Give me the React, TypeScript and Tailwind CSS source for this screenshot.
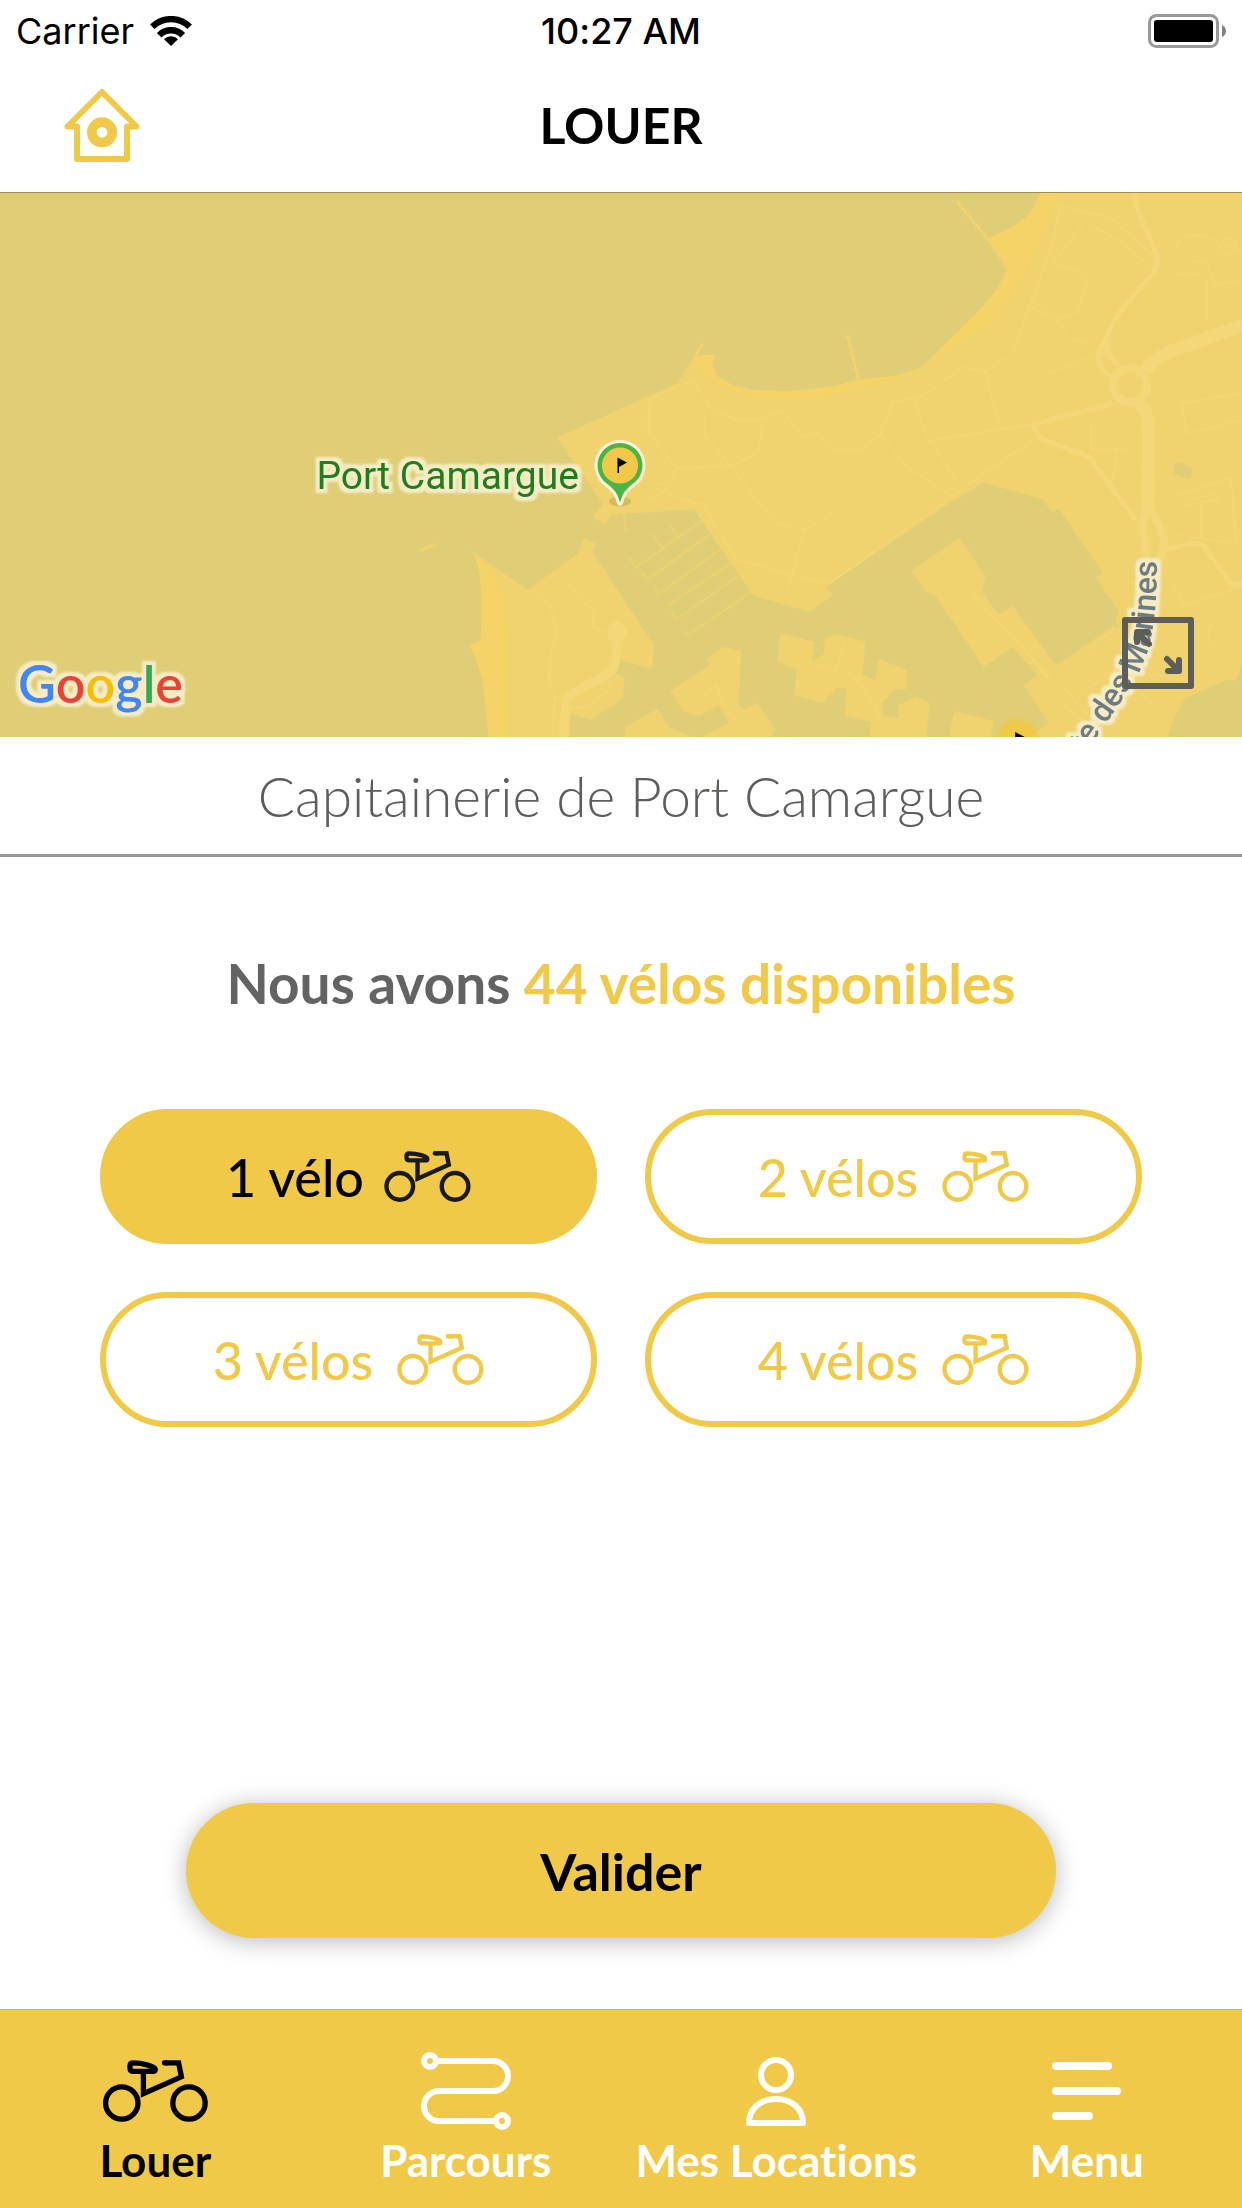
import { useState } from "react";

function BikeIcon({ className }: { className: string }) {
  return (
    <svg viewBox="0 0 105 62" className={className} fill="none" stroke="currentColor" strokeWidth="5.3" aria-hidden="true">
      <circle cx="18.8" cy="43" r="16.2" />
      <circle cx="86" cy="43" r="16.2" />
      <path d="M30 2.9C40 3 52.3 6.6 52.3 9.3Q52.3 11.4 50 11.4H30.5Q27 11.4 27 8V6Q27 2.9 30 2.9Z" />
      <path d="M40.4 12V33.6L78.4 16.8L75.6 2.8H62" />
      <path d="M61.5 2.8H64" strokeLinecap="round" />
    </svg>
  );
}

function HomeIcon() {
  return (
    <svg viewBox="0 0 76 74" className="h-[74px] w-[76px]" fill="none" stroke="currentColor" strokeWidth="6" strokeLinejoin="round" aria-hidden="true">
      <path d="M38 4L3.5 38.5H13V71H63V38.5H72.5Z" />
      <circle cx="38" cy="44.3" r="10.2" strokeWidth="9.6" />
    </svg>
  );
}

function WifiIcon() {
  return (
    <svg viewBox="0 0 42 30" className="h-[30px] w-[42px]" fill="none" stroke="black" strokeWidth="6.4" aria-hidden="true">
      <path d="M2.3 10.8A26.6 26.6 0 0 1 39.7 10.8" />
      <path d="M9.2 19.2A16.6 16.6 0 0 1 32.8 19.2" />
      <path d="M21 30L14 23.2A10 10 0 0 1 28 23.2Z" fill="black" stroke="none" />
    </svg>
  );
}

function BatteryIcon() {
  return (
    <svg viewBox="0 0 78 34" className="h-[34px] w-[78px]" aria-hidden="true">
      <rect x="1.5" y="1.5" width="68" height="31" rx="7" fill="none" stroke="#999" strokeWidth="3" />
      <rect x="6" y="6" width="59" height="22" rx="3" />
      <path d="M74 11Q78 13 78 17T74 23Z" fill="#808080" />
    </svg>
  );
}

function RouteIcon() {
  return (
    <svg viewBox="0 0 90 78" className="h-[78px] w-[90px]" fill="none" stroke="currentColor" strokeWidth="6" aria-hidden="true">
      <circle cx="9" cy="9" r="6" />
      <circle cx="81" cy="69" r="6" />
      <path d="M15 9H72A15 15 0 0 1 72 39H18A15 15 0 0 0 18 69H75" />
    </svg>
  );
}

function PersonIcon() {
  return (
    <svg viewBox="0 0 60 69" className="h-[69px] w-[60px]" fill="none" stroke="currentColor" strokeWidth="6" strokeLinejoin="round" aria-hidden="true">
      <circle cx="30" cy="18" r="15" />
      <path d="M3 66C3 52 14 42 30 42S57 52 57 66Z" />
    </svg>
  );
}

function MenuIcon() {
  return (
    <svg viewBox="0 0 69 60" className="h-[60px] w-[69px]" fill="none" stroke="currentColor" strokeWidth="8" strokeLinecap="round" aria-hidden="true">
      <path d="M4 5H56M4 30H65M4 55H37" />
    </svg>
  );
}

function Flag({ x, y }: { x: number; y: number }) {
  return <path d={`M${x - 2.5} ${y - 8}L${x + 7} ${y - 3}L${x - 1} ${y + 1.5}V${y + 7.5}H${x - 2.5}Z`} fill="black" />;
}

function StationMap() {
  return (
    <svg
      viewBox="0 0 1242 543"
      preserveAspectRatio="xMidYMid slice"
      className="block h-[544px] w-full bg-[#dfce76] font-[Roboto,sans-serif]"
      role="img"
      aria-label="Carte de Port Camargue"
    >
      <defs>
        <filter id="halo" filterUnits="userSpaceOnUse" x="0" y="0" width="1242" height="560" colorInterpolationFilters="sRGB">
          <feMorphology in="SourceAlpha" operator="dilate" radius="4" result="wide" />
          <feGaussianBlur in="wide" stdDeviation="1" result="soft" />
          <feFlood floodColor="#f5ecc6" />
          <feComposite in2="soft" operator="in" result="glow" />
          <feMerge>
            <feMergeNode in="glow" />
            <feMergeNode in="SourceGraphic" />
          </feMerge>
        </filter>
      </defs>
      <g fill="#f0d26f">
        <path d="M1242 0H1040L1039 4L1028 22L1012 34L988 45L1007 75L997 95L979 117L950 145L921 174L894 183L862 186L827 194L791 198L755 197L733 192L717 183L712 172L715 161L694 163L677 190L557 244L603 310L593 324L605 330L612 321L694 316L753 402L809 418L832 402L826 393L947 311L983 289L1042 306L1051 319L1058 315L1102 379L1095 384L1118 417L1114 431L1055 472L1012 412L998 421L981 397L985 383L959 344L911 377L926 399L934 401L983 473L1012 454L1037 481L1023 491L1048 529L1028 543H1167Q1172 520 1185 504L1212 492L1225 486L1234 487L1242 468Z" />
        <path d="M464 352L528 396L579 359L584 344L596 350L593 359L654 452L652 475L618 466L614 479L625 483L623 504L591 526L571 520L570 543H489L483 486L475 461L469 451L481 447L482 408L480 379L475 361Z" />
        <path d="M780 439L813 448L812 468L824 460V446L835 440L865 448L862 481L875 486L878 465L907 476L905 496L894 495L882 508V521L898 524V511L916 503L929 509L926 543H870V528L844 522L846 495L838 493L822 509L794 501L797 476L777 468Z" />
        <path d="M707 465L724 453L741 457L738 511L744 515L757 509L775 536L771 543H701L729 529L718 511L699 522L683 517L670 497L709 472Z" />
        <path d="M625 543V533L657 515L670 534L694 543Z" />
        <path d="M954 517L993 527L990 543H950V533Z" />
      </g>
      <g fill="#f5d367">
        <path d="M1059 0H1040L1039 4L1028 22L1012 34L988 45L1007 75L997 95L979 117L950 145L921 174L894 183L862 186L827 194L791 198L755 197L733 192L717 183L712 172L715 161L694 163V172L719 193L755 204L809 206L853 197L898 186L943 161L992 129L1024 83L1039 51Z" />
        <path d="M475 361L493 377L503 401L508 433V543H489L483 486L475 461L469 451L481 447L482 408L480 379Z" />
      </g>
      <path d="M1173 270L1180 269L1191 274L1190 286L1182 284L1173 280ZM1114 429L1120 433L1114 434Z" fill="#dfce76" />
      <g fill="none" stroke="#f0d26f">
        <path strokeWidth="3" d="M956 8L988 47L1007 75M702 150L694 166L680 188M847 142L858 186M420 357L436 351" />
        <path strokeWidth="2" opacity=".75" d="M701 327L636 374L629 364M711 340L647 386L641 377M721 355L658 401L654 394M732 369L668 411M738 382L676 426L672 418M750 399L687 442L684 437M678 343L670 332M662 354L652 339M624 321L626 339" />
      </g>
      <g fill="none" stroke="#f4d778" strokeLinejoin="round">
        <path strokeWidth="5" d="M1133 0L1135 13L1153 54Q1158 66 1154 78L1122 115Q1104 138 1106 152T1118 172M1104 145Q1096 158 1098 168T1112 184M1098 163Q1104 156 1110 163M1111 209Q1105 213 1093 215L1032 231L1039 245L1088 263L1135 327" />
        <circle cx="1129" cy="192" r="17" strokeWidth="8" />
        <path strokeWidth="13" d="M1144 178Q1154 164 1172 157L1242 132M1138 208Q1148 220 1148 240V268L1146 320" />
        <path strokeWidth="8" d="M1146 318Q1138 332 1144 346L1147 372M1150 318Q1164 336 1163 354L1154 376" />
        <path strokeWidth="5" d="M1165 356L1190 350Q1202 348 1206 357L1228 388Q1234 394 1242 388" />
        <path strokeWidth="9" d="M618 436L615 470Q614 476 608 480L571 500Q566 504 566 510L563 543" />
        <path strokeWidth="20" d="M617 438V439" strokeLinecap="round" />
      </g>
      <g fill="none" stroke="#f3d676" strokeWidth="1.5">
        <path d="M1059 14L1052 50L1028 115L1012 160L985 178L962 174L920 204L893 208L880 240L862 256H830L815 238L802 244L783 218L758 226H734L712 216L693 187L650 205L648 238L676 275L730 272L775 330L804 336L835 318" />
        <path d="M704 218V240L730 272L758 260L762 236L758 226M676 275L668 300L695 310H702L736 366L818 388L829 390L983 280L1035 245M804 336L788 395M880 240L905 272L955 305M912 204L925 240L958 290M998 230L984 178L975 174M925 248L1030 231" />
        <path d="M1055 12L1110 25L1152 62M1083 30L1052 70L1088 82L1076 120L1060 125L1030 108M1088 32Q1120 45 1150 75M1030 113L1058 128L1068 145L1096 152M1044 181L1096 162M1170 84Q1196 74 1206 90V130M1176 55Q1178 42 1200 42L1242 60M1185 67L1206 70L1213 92L1242 87M1242 200L1180 210L1186 240L1242 226M1170 304L1230 285L1235 350L1170 340M1185 307L1218 300V306L1185 312V307M1200 310V345M1090 230V256H1128M1115 256Q1116 280 1108 292" />
        <path d="M528 396L550 412L558 436L551 460L549 490L555 502L553 543M562 380L585 410L594 415L592 433L604 438M555 503H567M570 514L590 512L610 495V482" />
        <path d="M1114 434L1100 445L1085 462M968 395L990 420L1020 452L1048 485M1020 452L1050 485M1080 500L1112 476L1150 508M1060 510L1100 540M1170 390L1180 402V412L1242 393M1120 512L1150 480L1190 488M1212 430Q1200 440 1215 452M1060 490L1090 525M700 505L716 492L728 520L743 530M815 470L835 478L845 450M846 474L870 505L882 530" />
        <circle cx="645" cy="229" r="5" />
        <ellipse cx="656" cy="297" rx="13" ry="5" transform="rotate(-30 656 297)" />
        <circle cx="1227" cy="54" r="8" />
      </g>
      <path id="marines-road" d="M1040 618C1080 566 1114 520 1138 478C1152 450 1156 420 1156 367" fill="none" />
      <text fontSize="32" fontWeight="500" fill="#6d7b84" filter="url(#halo)" textAnchor="end">
        <textPath href="#marines-road" startOffset="100%">Route des Marines</textPath>
      </text>
      <text x="317" y="295" fontSize="39" fill="#1e7e1e" filter="url(#halo)">
        Port Camargue
      </text>
      <ellipse cx="620" cy="308" rx="11" ry="5" fill="#a08b45" opacity=".35" />
      <path d="M620 309C617 299 615 297 608 291A22.5 22.5 0 1 1 632 291C625 297 623 299 620 309Z" fill="#4bb543" stroke="#fbf3d8" strokeWidth="6" paintOrder="stroke" strokeLinejoin="round" />
      <circle cx="620" cy="272" r="18" fill="#f0c948" />
      <Flag x={620} y={272} />
      <circle cx="1017" cy="545" r="22" fill="#f0c948" opacity=".45" />
      <circle cx="1017" cy="545" r="18" fill="#f0c948" />
      <Flag x={1017} y={546} />
      <text x="19" y="509" fontSize="52" fontWeight="600" className="font-[Lato,sans-serif]" filter="url(#halo)">
        <tspan fill="#4285f4">G</tspan>
        <tspan fill="#ea4335">o</tspan>
        <tspan fill="#fbbc05">o</tspan>
        <tspan fill="#4285f4">g</tspan>
        <tspan fill="#34a853">l</tspan>
        <tspan fill="#ea4335">e</tspan>
      </text>
    </svg>
  );
}

const options = [1, 2, 3, 4];

const tabs = [
  { label: "Louer", icon: <BikeIcon className="h-[62px] w-[105px]" />, active: true },
  { label: "Parcours", icon: <RouteIcon />, active: false },
  { label: "Mes Locations", icon: <PersonIcon />, active: false },
  { label: "Menu", icon: <MenuIcon />, active: false },
];

export default function App() {
  const [count, setCount] = useState(1);

  return (
    <div className="flex min-h-screen flex-col bg-white font-[Lato,sans-serif] text-black [font-variant-ligatures:none]">
      <div className="grid h-[60px] grid-cols-3 items-center px-4 pt-0.5 font-[Inter,sans-serif] text-[36px] leading-[40px]">
        <div className="flex items-center gap-4">
          <span>Carrier</span>
          <WifiIcon />
        </div>
        <span className="text-center font-medium">10:27 AM</span>
        <div className="flex justify-end">
          <BatteryIcon />
        </div>
      </div>

      <header className="grid h-[133px] grid-cols-[1fr_auto_1fr] items-center border-b border-[#9c8f50] px-16 pb-0.5">
        <button type="button" aria-label="Accueil" className="justify-self-start text-[#f0c948]">
          <HomeIcon />
        </button>
        <h1 className="text-[50px] leading-[56px] font-bold">LOUER</h1>
      </header>

      <div className="relative overflow-hidden">
        <StationMap />
        <button type="button" aria-label="Agrandir la carte" className="absolute right-12 bottom-12 text-[#5d5d5a]">
          <svg viewBox="0 0 72 72" className="h-[72px] w-[72px]" fill="none" stroke="currentColor" strokeLinejoin="round" strokeLinecap="round" aria-hidden="true">
            <rect x="3" y="3" width="66" height="66" strokeWidth="6" />
            <path strokeWidth="6" d="M15 25V15H26M16 16L27 27M46 54H57V43M45 42L56 53" />
            <path strokeWidth="2" fill="currentColor" d="M14 14H24L14 24ZM58 55H47L58 44Z" />
          </svg>
        </button>
      </div>

      <h2 className="border-b-[3px] border-[#979797] px-8 pt-[31px] pb-[30px] text-center text-[55px] leading-[56px] font-light text-[#5d5d5a]">
        Capitainerie de Port Camargue
      </h2>

      <main className="flex flex-1 flex-col px-[100px] pt-[98px] pb-[71px]">
        <p className="text-center text-[55px] leading-[56px] font-bold text-[#636363]">
          Nous avons <span className="text-[#f0c948]">44 vélos disponibles</span>
        </p>

        <div className="mt-[98px] grid grid-cols-2 gap-12">
          {options.map((n) => (
            <button
              key={n}
              type="button"
              aria-pressed={n === count}
              onClick={() => setCount(n)}
              className={
                n === count
                  ? "flex h-[135px] items-center justify-center gap-5 rounded-full border-[6px] border-[#f0c948] bg-[#f0c948] text-[52px] leading-[56px] font-medium text-black"
                  : "flex h-[135px] items-center justify-center gap-6 rounded-full border-[6px] border-[#f0c948] bg-white text-[52px] leading-[56px] font-medium text-[#f0c948]"
              }
            >
              <span>
                {n} {n > 1 ? "vélos" : "vélo"}
              </span>
              <BikeIcon className={n === count ? "h-[51px] w-[87px] text-[#1a1a1a]" : "h-[51px] w-[87px]"} />
            </button>
          ))}
        </div>

        <button
          type="button"
          className="mx-[86px] mt-auto h-[135px] rounded-full bg-[#f0c948] text-[52px] leading-[56px] font-bold shadow-[0_3px_24px_rgba(0,0,0,0.28)]"
        >
          Valider
        </button>
      </main>

      <nav className="grid h-[199px] grid-cols-4 border-t border-[#b0b0b0] bg-[#f0c948] pt-[42px]">
        {tabs.map((tab) => (
          <a
            key={tab.label}
            href={`#${tab.label}`}
            aria-current={tab.active ? "page" : undefined}
            className={tab.active ? "flex flex-col items-center gap-2 text-black" : "flex flex-col items-center gap-2 text-white"}
          >
            <span className="flex h-[78px] items-center">{tab.icon}</span>
            <span className="text-[44px] leading-[44px] font-bold whitespace-nowrap">{tab.label}</span>
          </a>
        ))}
      </nav>
    </div>
  );
}
